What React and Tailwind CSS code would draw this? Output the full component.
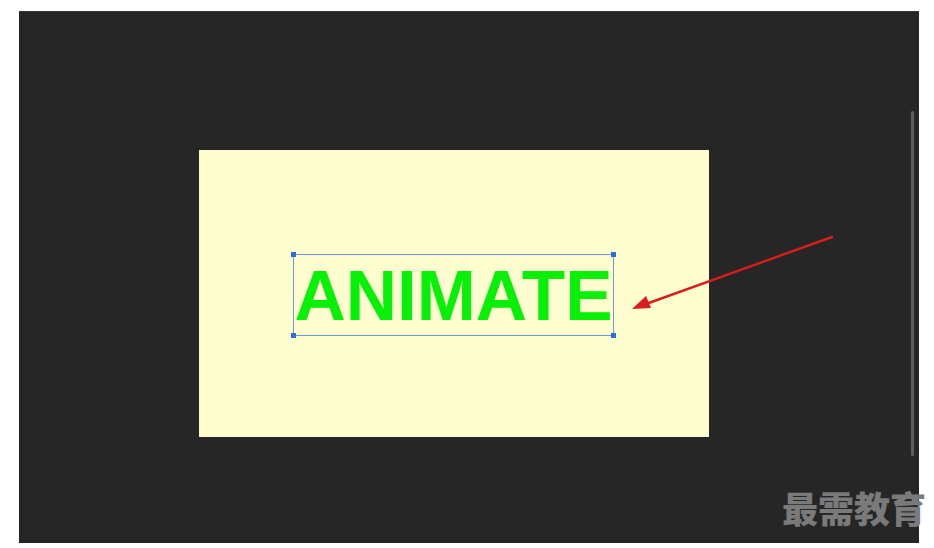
import React from 'react';

const Handle = ({ className }) => (
  <span className={`absolute h-[5px] w-[5px] bg-[#2f6fd2] ${className}`} />
);

const App = () => {
  return (
    <div className="relative h-[548px] w-[934px] overflow-hidden bg-white">
      <div className="relative ml-[19px] mt-[11px] h-[532px] w-[900px] border-t border-[#363636] bg-[#262626] pl-[180px] pt-[138px]">
        {/* stage */}
        <div className="h-[287px] w-[510px] bg-[#fefdd0] pl-[94px] pt-[104px]">
          <div className="relative flex h-[82px] w-[321px] items-center justify-center border border-[#6f9ad8]">
            <Handle className="-left-[3px] -top-[3px]" />
            <Handle className="-right-[3px] -top-[3px]" />
            <Handle className="-bottom-[3px] -left-[3px]" />
            <Handle className="-bottom-[3px] -right-[3px]" />
            <span
              className="text-[71px] font-bold leading-none text-[#08f008]"
              style={{ fontFamily: '"Liberation Sans", Arial, sans-serif' }}
            >
              ANIMATE
            </span>
          </div>
        </div>

        {/* scrollbar */}
        <div className="absolute right-[5px] top-[99px] h-[345px] w-[3px] rounded-full bg-[#5e5e5e]" />
      </div>

      {/* annotation arrow */}
      <svg className="absolute left-0 top-0" width="934" height="548" viewBox="0 0 934 548">
        <line x1="832" y1="237" x2="646" y2="304" stroke="#d91c1c" strokeWidth="2.4" strokeLinecap="round" />
        <polygon points="632,309 646,296 651,308" fill="#d91c1c" />
      </svg>

      {/* watermark */}
      <div
        className="absolute left-[782px] top-[489px] text-[36px] font-black leading-none text-[#7a7a7a]"
        style={{ fontFamily: '"Noto Sans CJK SC", sans-serif' }}
      >
        最需教育
      </div>
    </div>
  );
};

export default App;
